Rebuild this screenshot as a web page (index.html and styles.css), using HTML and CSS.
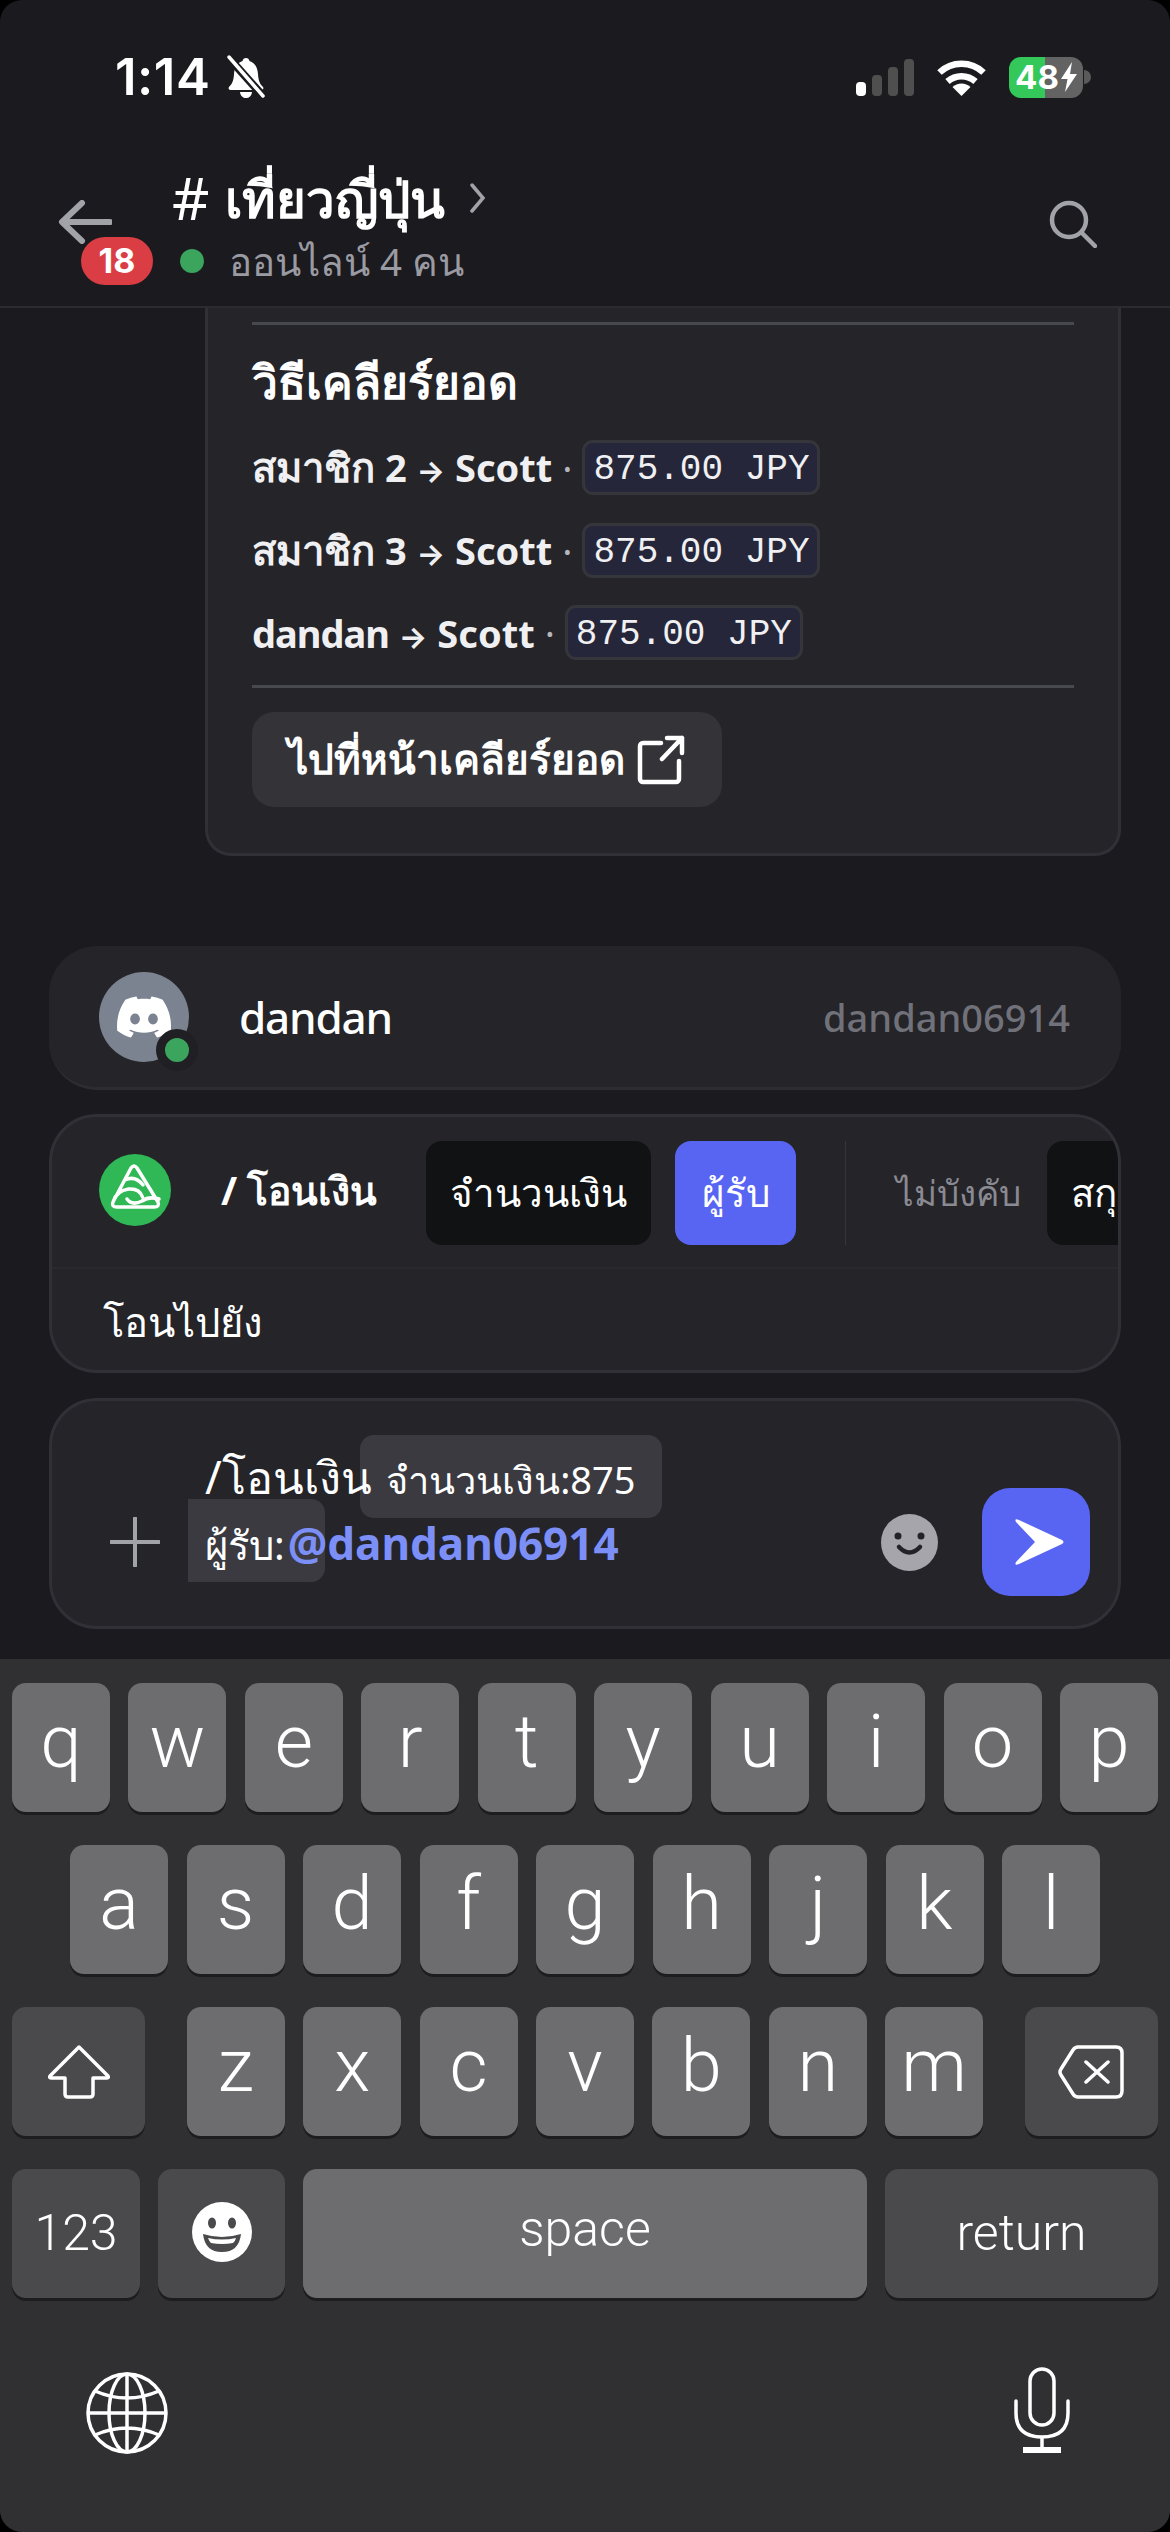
FILE: index.html
```html
<!DOCTYPE html>
<html lang="th">
<head>
<meta charset="utf-8">
<title>เที่ยวญี่ปุ่น</title>
<link rel="stylesheet" href="styles.css">
</head>
<body>
<div class="phone">
  <div class="status">
    <div class="status-left">
      <span class="time">1:14</span>
      <svg class="bell" viewBox="0 0 40 44"><path d="M20 3c2 0 3 1 3.500 3 6 2 8 7 8.500 13 .4 7 2 10 5 13 1 1.500 0 3-2 3H5c-2 0-3-1.500-2-3 3-3 4.600-6 5-13 .5-6 2.500-11 8.500-13 .5-2 1.500-3 3.500-3z" fill="#fff"/><path d="M14 37h12c-.5 4-3 6-6 6s-5.500-2-6-6z" fill="#fff"/><path d="M3 3l34 38" stroke="#1a1a1f" stroke-width="8"/><path d="M3 2l34 39" stroke="#fff" stroke-width="3.500" stroke-linecap="round"/></svg>
    </div>
    <div class="status-right">
      <div class="signal"><i class="bar b1"></i><i class="bar b2"></i><i class="bar b3"></i><i class="bar b4"></i></div>
      <svg class="wifi" viewBox="0 0 51 37"><path d="M3.500 13.500a32 32 0 0 1 44 0M11.500 22.500a21 21 0 0 1 28 0" fill="none" stroke="#fff" stroke-width="6.500"/><path d="M25.500 37L16.500 28a13 13 0 0 1 18 0z" fill="#fff"/></svg>
      <div class="battery"><span class="batt-num">48</span><svg class="bolt" viewBox="0 0 16 30"><path d="M11 0L0 17h6.500L4 30 16 12H9z" fill="#fff"/></svg></div>
      <i class="nub"></i>
    </div>
  </div>

  <header class="header">
    <svg class="back" viewBox="0 0 54 44"><path d="M24 3L4 22l20 19M5 22h47" fill="none" stroke="#a2a2a9" stroke-width="6" stroke-linecap="round" stroke-linejoin="round"/></svg>
    <span class="badge">18</span>
    <div class="head-text">
      <div class="title"><span class="hash">#</span> เที่ยวญี่ปุ่น <svg class="chev" viewBox="0 0 16 30"><path d="M2 2l11 13L2 28" fill="none" stroke="#a2a2a9" stroke-width="3.500" stroke-linecap="round"/></svg></div>
      <div class="sub"><i class="dot"></i>ออนไลน์ 4 คน</div>
    </div>
    <svg class="search" viewBox="0 0 48 48"><circle cx="20" cy="20" r="17" fill="none" stroke="#a2a2a9" stroke-width="4.500"/><path d="M33 33l13 13" stroke="#a2a2a9" stroke-width="4.500" stroke-linecap="round"/></svg>
  </header>

  <main class="messages">
    <section class="card">
      <hr class="rule">
      <h2 class="card-title">วิธีเคลียร์ยอด</h2>
      <div class="settle"><b><span class="th">สมาชิก</span> 2 <span class="arrow">→</span> Scott</b><span class="sep">·</span><code class="code">875.00 JPY</code></div>
      <div class="settle"><b><span class="th">สมาชิก</span> 3 <span class="arrow">→</span> Scott</b><span class="sep">·</span><code class="code">875.00 JPY</code></div>
      <div class="settle"><b><span class="nm">dandan</span> <span class="arrow">→</span> Scott</b><span class="sep">·</span><code class="code">875.00 JPY</code></div>
      <hr class="rule rule2">
      <div class="link-btn">ไปที่หน้าเคลียร์ยอด
        <svg class="ext" viewBox="0 0 48 50"><path d="M24 8H6a3 3 0 0 0-3 3v33a3 3 0 0 0 3 3h33a3 3 0 0 0 3-3V26M30 3h15v15M45 3L25 24" fill="none" stroke="#fff" stroke-width="4.500" stroke-linecap="round" stroke-linejoin="round"/></svg>
      </div>
    </section>

    <section class="user-row">
      <div class="avatar">
        <svg class="clyde" viewBox="0 0 24 24"><path fill="#fff" d="M20.317 4.3698a19.7913 19.7913 0 00-4.8851-1.5152.0741.0741 0 00-.0785.0371c-.211.3753-.4447.8648-.6083 1.2495-1.8447-.2762-3.68-.2762-5.4868 0-.1636-.3933-.4058-.8742-.6177-1.2495a.077.077 0 00-.0785-.037 19.7363 19.7363 0 00-4.8852 1.515.0699.0699 0 00-.0321.0277C.5334 9.0458-.319 13.5799.0992 18.0578a.0824.0824 0 00.0312.0561c2.0528 1.5076 4.0413 2.4228 5.9929 3.0294a.0777.0777 0 00.0842-.0276c.4616-.6304.8731-1.2952 1.226-1.9942a.076.076 0 00-.0416-.1057c-.6528-.2476-1.2743-.5495-1.8722-.8923a.077.077 0 01-.0076-.1277c.1258-.0943.2517-.1923.3718-.2914a.0743.0743 0 01.0776-.0105c3.9278 1.7933 8.18 1.7933 12.0614 0a.0739.0739 0 01.0785.0095c.1202.099.246.1981.3728.2924a.077.077 0 01-.0066.1276 12.2986 12.2986 0 01-1.873.8914.0766.0766 0 00-.0407.1067c.3604.698.7719 1.3628 1.225 1.9932a.076.076 0 00.0842.0286c1.961-.6067 3.9495-1.5219 6.0023-3.0294a.077.077 0 00.0313-.0552c.5004-5.177-.8382-9.6739-3.5485-13.6604a.061.061 0 00-.0312-.0286zM8.02 15.3312c-1.1825 0-2.1569-1.0857-2.1569-2.419 0-1.3332.9555-2.4189 2.157-2.4189 1.2108 0 2.1757 1.0952 2.1568 2.419 0 1.3332-.9555 2.4189-2.1569 2.4189zm7.9748 0c-1.1825 0-2.1569-1.0857-2.1569-2.419 0-1.3332.9554-2.4189 2.1569-2.4189 1.2108 0 2.1757 1.0952 2.1568 2.419 0 1.3332-.946 2.4189-2.1568 2.4189Z"/></svg>
        <i class="presence"></i>
      </div>
      <span class="user-name">dandan</span>
      <span class="user-handle">dandan06914</span>
    </section>

    <section class="cmd">
      <div class="cmd-top">
        <svg class="cmd-logo" viewBox="0 0 72 72"><circle cx="36" cy="36" r="36" fill="#2fb855"/><path d="M32 14q3-4 6 0l21 34q2 5-4 5H18q-6 0-4-5zM14.500 47q3-10 15-12 11-1 14 8M26 26q10-5 18 5M28 45q5 7 15 2 7-5 17-2" fill="none" stroke="#fff" stroke-width="3.500" stroke-linecap="round" stroke-linejoin="round"/></svg>
        <span class="cmd-name">/ โอนเงิน</span>
        <span class="chip chip-dark">จำนวนเงิน</span>
        <span class="chip chip-blue">ผู้รับ</span>
        <i class="vline"></i>
        <span class="optional">ไม่บังคับ</span>
        <span class="chip chip-dark chip-last">สกุลเงิน</span>
      </div>
      <div class="cmd-desc">โอนไปยัง</div>
    </section>

    <section class="input">
      <svg class="plus" viewBox="0 0 50 50"><path d="M25 1v48M1 25h48" stroke="#a2a2a9" stroke-width="4" stroke-linecap="round"/></svg>
      <div class="input-text"><span class="t-plain">/โอนเงิน</span> <span class="opt opt1">จำนวนเงิน:875</span><br><span class="opt opt2">ผู้รับ:</span><span class="mention">@dandan06914</span></div>
      <svg class="smile" viewBox="0 0 57 57"><circle cx="28.500" cy="28.500" r="28.500" fill="#a5a5ab"/><circle cx="17" cy="22" r="3.500" fill="#232327"/><circle cx="40" cy="22" r="3.500" fill="#232327"/><path d="M18 33q10.500 11 21 0" fill="none" stroke="#232327" stroke-width="4.500" stroke-linecap="round"/></svg>
      <div class="send"><svg class="send-i" viewBox="0 0 52 50"><path d="M3 5q-2-4 3-2l43 20q3 2 0 4L6 47q-5 2-3-2l19-20z" fill="#fff"/></svg></div>
    </section>
  </main>

  <section class="keyboard">
    <div class="kb-row"><span class="key">q</span><span class="key">w</span><span class="key">e</span><span class="key">r</span><span class="key">t</span><span class="key">y</span><span class="key">u</span><span class="key">i</span><span class="key">o</span><span class="key">p</span></div>
    <div class="kb-row kb-row2"><span class="key">a</span><span class="key">s</span><span class="key">d</span><span class="key">f</span><span class="key">g</span><span class="key">h</span><span class="key">j</span><span class="key">k</span><span class="key">l</span></div>
    <div class="kb-row kb-row3">
      <span class="key mod shift"><svg class="shift-i" viewBox="0 0 64 54"><path d="M32 2L3 31q-1 2 1 2h14v16q0 3 3 3h22q3 0 3-3V33h14q2 0 1-2z" fill="none" stroke="#fff" stroke-width="3.500" stroke-linejoin="round"/></svg></span>
      <span class="key-gap"></span>
      <span class="key">z</span><span class="key">x</span><span class="key">c</span><span class="key">v</span><span class="key">b</span><span class="key">n</span><span class="key">m</span>
      <span class="key-gap"></span>
      <span class="key mod shift"><svg class="del-i" viewBox="0 0 66 54"><path d="M20 2h38q6 0 6 6v38q0 6-6 6H20q-3 0-5-3L3 30q-2-3 0-6L15 5q2-3 5-3zM28 17l22 20M50 17L28 37" fill="none" stroke="#fff" stroke-width="3.500" stroke-linejoin="round" stroke-linecap="round"/></svg></span>
    </div>
    <div class="kb-row">
      <span class="key mod k123">123</span>
      <span class="key mod kemoji"><svg class="emoji-i" viewBox="0 0 60 60"><circle cx="30" cy="30" r="30" fill="#fff"/><ellipse cx="20" cy="21" rx="4" ry="5.500" fill="#4a4a4c"/><ellipse cx="40" cy="21" rx="4" ry="5.500" fill="#4a4a4c"/><path d="M11 32q19 6 38 0-2 18-19 18T11 32z" fill="#4a4a4c"/><path d="M16 36q14 3 28 0-1 4-3 5-11 2-22 0-2-2-3-5z" fill="#fff"/></svg></span>
      <span class="key kspace">space</span>
      <span class="key mod kreturn">return</span>
    </div>
    <div class="kb-bottom">
      <svg class="globe" viewBox="0 0 82 82"><g fill="none" stroke="#fff" stroke-width="3.500"><circle cx="41" cy="41" r="39"/><ellipse cx="41" cy="41" rx="18" ry="39"/><path d="M41 2v78M2 41h78M9 19q32 14 64 0M9 63q32-14 64 0"/></g></svg>
      <svg class="mic" viewBox="0 0 56 86"><g fill="none" stroke="#fff" stroke-width="3.500" stroke-linecap="round"><rect x="16" y="2" width="24" height="56" rx="12"/><path d="M2 34v12q0 24 26 24t26-24V34M28 70v14"/></g><path d="M9 80h38v6H9z" fill="#fff"/></svg>
    </div>
  </section>
</div>
</body>
</html>
```
FILE: styles.css
```css
* { box-sizing: border-box; }
html, body { margin: 0; padding: 0; background: #000; }
body { width: 1170px; height: 2532px; overflow: hidden; font-family: "Noto Sans", "Inter", "DejaVu Sans", sans-serif; color: #fff; }
.phone { width: 1170px; height: 2532px; display: flex; flex-direction: column; background: #1a1a1f; border-radius: 22px; overflow: hidden; }

.status { height: 160px; flex: none; display: flex; justify-content: space-between; align-items: flex-start; padding: 51px 79px 0 115px; }
.status-left { display: flex; align-items: center; gap: 16px; }
.time { font: 600 51px/52px Inter, sans-serif; letter-spacing: 0.500px; }
.bell { width: 40px; height: 44px; }
.status-right { display: flex; align-items: center; height: 44px; margin-top: 4px; }
.signal { display: flex; align-items: flex-end; gap: 6px; height: 38px; margin-right: 22px; }
.bar { width: 10px; background: #4f4f4f; border-radius: 4px; }
.b1 { height: 14px; background: #fff; }
.b2 { height: 21px; }
.b3 { height: 29px; }
.b4 { height: 37px; }
.wifi { width: 51px; height: 37px; margin-right: 22px; }
.battery { width: 74px; height: 41px; border-radius: 12px; background: linear-gradient(90deg, #34c85a 48%, #636363 48%); display: flex; align-items: center; justify-content: center; gap: 2px; }
.batt-num { font: 700 33px/41px Inter, sans-serif; }
.bolt { width: 16px; height: 30px; }
.nub { width: 7px; height: 14px; background: #5a5a5a; border-radius: 0 7px 7px 0; margin-left: 1px; }

.header { height: 148px; flex: none; display: flex; position: relative; border-bottom: 2px solid #2b2b30; padding: 0 73px 0 58px; }
.back { width: 54px; height: 44px; margin-top: 40px; flex: none; }
.badge { position: absolute; left: 81px; top: 77px; width: 72px; height: 48px; border-radius: 24px; background: #da3e44; font: 700 34px/48px Inter, sans-serif; text-align: center; }
.head-text { margin-left: 60px; flex: 1; }
.title { font: 700 51px/70px "Noto Sans", sans-serif; white-space: nowrap; display: flex; align-items: center; gap: 16px; height: 70px; margin-top: 3px; }
.hash { font-weight: 400; font-size: 58px; line-height: 60px; }
.chev { width: 16px; height: 30px; margin-left: 9px; }
.sub { display: flex; align-items: center; font: 400 38.500px/52px "Noto Sans", sans-serif; color: #9a9aa2; margin-top: 2px; white-space: nowrap; }
.dot { width: 24px; height: 24px; border-radius: 50%; background: #3ba55d; margin: 0 25px 0 8px; }
.search { width: 48px; height: 48px; margin-top: 40px; flex: none; }

.messages { flex: 1; min-height: 0; overflow: hidden; display: flex; flex-direction: column; padding: 0 49px; }
.card { margin-left: 156px; height: 548px; flex: none; background: #242429; border: 3px solid #303036; border-top: 0; border-radius: 0 0 26px 26px; padding: 14px 44px 0; display: flex; flex-direction: column; }
.rule { width: 100%; height: 3px; background: #48484f; border: 0; margin: 0; flex: none; }
.card-title { font: 700 46px/60px "Noto Sans", sans-serif; margin: 26px 0 29px; white-space: nowrap; }
.settle { display: flex; align-items: center; height: 55px; margin-bottom: 27px; font-size: 38px; color: #f0f0f2; white-space: nowrap; }
.settle:nth-of-type(1) { margin-bottom: 28px; }
.settle:nth-of-type(3) { margin-bottom: 25px; }
.settle b { font-weight: 700; }
.th { font-size: 40px; }
.arrow { font-size: 30px; }
.nm { letter-spacing: -1px; }
.sep { margin: 0 10px; color: #b5b5bb; }
.code { width: 238px; height: 55px; border: 3px solid #35353c; border-radius: 11px; background: #25263a; font: 400 36px/53px "Liberation Mono", "DejaVu Sans Mono", monospace; text-align: center; color: #f0f0f2; }
.link-btn { margin-top: 24px; width: 470px; height: 95px; border-radius: 22px; background: #333338; display: flex; align-items: center; gap: 12px; padding-left: 36px; font-size: 40.500px; font-weight: 600; white-space: nowrap; }
.ext { width: 48px; height: 50px; }

.user-row { margin-top: 90px; height: 144px; flex: none; background: #242429; border-bottom: 3px solid #2c2c31; border-radius: 48px; display: flex; align-items: center; padding: 0 51px 0 50px; }
.avatar { width: 90px; height: 90px; border-radius: 50%; background: #7b8290; position: relative; display: flex; align-items: center; justify-content: center; flex: none; }
.clyde { width: 54px; height: 54px; }
.presence { position: absolute; right: -9px; bottom: -9px; width: 42px; height: 42px; border-radius: 50%; background: #3ba55d; border: 9px solid #202024; }
.user-name { margin-left: 50px; font: 500 44px/60px "Noto Sans", sans-serif; letter-spacing: -1.200px; flex: 1; }
.user-handle { font: 500 38px/60px "Noto Sans", sans-serif; color: #71717a; }

.cmd { margin-top: 24px; height: 259px; flex: none; background: #242429; border: 3px solid #303036; border-radius: 48px; overflow: hidden; display: flex; flex-direction: column; }
.cmd-top { height: 152px; flex: none; display: flex; align-items: center; padding: 2px 0 0 47px; border-bottom: 2px solid #29292e; white-space: nowrap; }
.cmd-logo { width: 72px; height: 72px; flex: none; margin-top: -6px; }
.cmd-name { margin-left: 50px; font: 700 39px/52px "Noto Sans", sans-serif; width: 205px; flex: none; margin-top: -6px; }
.chip { height: 104px; border-radius: 16px; display: flex; align-items: center; justify-content: center; font-size: 38.500px; flex: none; }
.chip-dark { width: 225px; background: #111214; }
.chip-blue { width: 121px; margin-left: 24px; background: #5865f2; }
.vline { width: 1px; height: 104px; background: #35353b; margin: 0 50px 0 49px; flex: none; }
.optional { font-size: 35px; color: #8a8a92; width: 151px; flex: none; }
.chip-last { justify-content: flex-start; padding-left: 24px; width: 130px; }
.cmd-desc { padding: 23px 0 0 51px; font-size: 40px; line-height: 60px; }

.input { margin-top: 25px; height: 231px; flex: none; background: #242429; border: 3px solid #303036; border-radius: 48px; display: flex; align-items: flex-end; padding: 0 28px 30px 58px; }
.plus { width: 50px; height: 50px; margin-bottom: 29px; flex: none; }
.input-text { margin: 0 0 19px 45px; flex: 1; font-size: 40px; line-height: 64px; white-space: nowrap; }
.t-plain, .opt, .mention { position: relative; }
.t-plain { z-index: 2; font-size: 45px; }
.opt { background: #3a3a40; }
.opt1 { z-index: 1; border-radius: 14px; margin-left: -22px; font-size: 38px; padding: 18px 26px 13px; }
.opt2 { z-index: 3; border-radius: 0 14px 14px 0; padding: 18px 40px 10px 17px; margin: 0 -37px 0 -17px; }
.mention { z-index: 4; color: #7b8ff7; font-weight: 700; font-size: 44px; }
.smile { width: 57px; height: 57px; margin: 0 44px 25px 0; flex: none; }
.send { width: 108px; height: 108px; border-radius: 28px; background: #5865f2; flex: none; display: flex; align-items: center; justify-content: center; }
.send-i { width: 52px; height: 50px; margin-left: 6px; }

.keyboard { height: 873px; flex: none; background: #303032; padding: 24px 12px 0; display: flex; flex-direction: column; }
.kb-row { display: flex; justify-content: space-between; height: 129px; margin-bottom: 33px; flex: none; }
.kb-row2 { padding: 0 58px; }
.kb-row3 { justify-content: flex-start; gap: 18.400px; }
.key { width: 98px; height: 129px; border-radius: 14px; background: #6d6d6f; box-shadow: 0 3px 0 #1d1d1f; display: flex; align-items: center; justify-content: center; font: 300 74px/129px Roboto, sans-serif; flex: none; padding-bottom: 12px; }
.mod { background: #4a4a4c; }
.shift { width: 133px; padding: 0; }
.key-gap { width: 5px; flex: none; }
.shift-i { width: 64px; height: 54px; }
.del-i { width: 66px; height: 54px; }
.k123 { width: 128px; font-size: 50px; padding: 0; }
.kemoji { width: 127px; padding: 0 0 4px; }
.emoji-i { width: 60px; height: 60px; }
.kspace { width: 564px; font-size: 50px; padding-bottom: 8px; }
.kreturn { width: 273px; font-size: 50px; padding: 0; }
.kb-bottom { display: flex; justify-content: space-between; align-items: flex-start; padding: 38px 88px 0 74px; }
.globe { width: 82px; height: 82px; margin-top: 3px; }
.mic { width: 56px; height: 86px; margin-top: -2px; }
```
